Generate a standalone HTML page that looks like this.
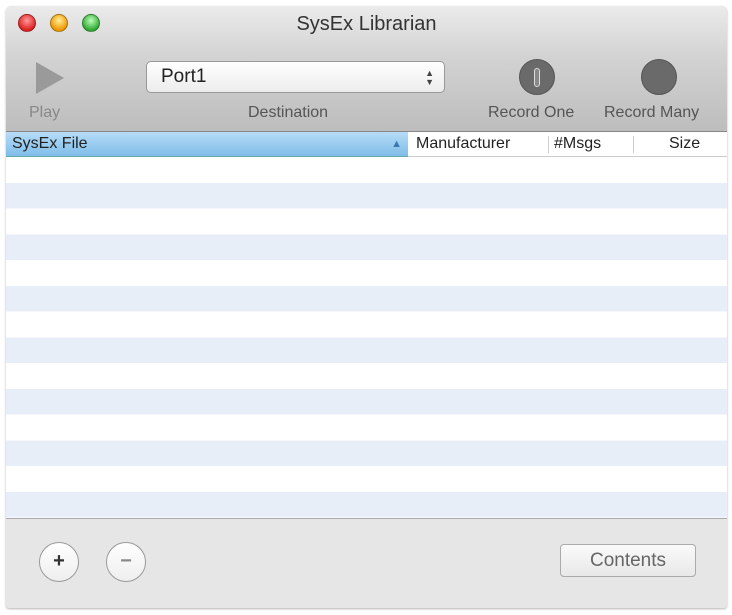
<!DOCTYPE html>
<html><head><meta charset="utf-8"><style>
*{margin:0;padding:0;box-sizing:border-box}
body{width:732px;height:615px;background:#fff;font-family:"Liberation Sans",sans-serif;position:relative;overflow:hidden}
.win{position:absolute;left:6px;top:6px;width:721px;height:602px;background:#e6e6e6;border-radius:5px 5px 3px 3px;overflow:hidden;box-shadow:0 1px 2px rgba(0,0,0,.3)}
.tb{position:absolute;left:0;top:0;width:721px;height:126px;background:linear-gradient(#ebebeb,#d3d3d3 40%,#bdbdbd);border-bottom:1px solid #888}
.light{position:absolute;top:8px;width:18px;height:18px;border-radius:50%;border:1px solid rgba(0,0,0,.3)}
.title{position:absolute;left:0;width:721px;top:7px;text-align:center;font-size:20px;color:#333}
.lbl{position:absolute;top:98px;font-size:16px;color:#555}
.hdr{position:absolute;top:126px;left:0;width:721px;height:25px;background:#fff;border-bottom:1px solid #ccc;font-size:16px;color:#222}
.rows{position:absolute;top:151px;left:0;width:721px;height:361px;background:repeating-linear-gradient(#fff 0,#fff 26px,#e8eef8 26px,#e8eef8 51.5px)}
.bot{position:absolute;top:512px;left:0;width:721px;height:90px;border-top:1px solid #aaa;background:#e6e6e6}
.cb{position:absolute;width:40px;height:40px;border-radius:50%;border:1px solid #999;background:linear-gradient(#fff,#eee);text-align:center;line-height:37px;font-size:20px;font-weight:bold}
</style></head><body>
<div class="win">
<div class="tb">
<div class="light" style="left:12px;background:radial-gradient(circle at 50% 35%,#f99,#d22 70%)"></div>
<div class="light" style="left:44px;background:radial-gradient(circle at 50% 35%,#fe9,#e90 70%)"></div>
<div class="light" style="left:76px;background:radial-gradient(circle at 50% 35%,#bfb,#3a3 70%)"></div>
<div class="title">SysEx Librarian</div>
<svg style="position:absolute;left:28px;top:54px" width="32" height="36"><polygon points="2,2 30,18 2,34" fill="#9a9a9a"/></svg>
<div class="lbl" style="left:23px;color:#888">Play</div>
<div style="position:absolute;left:140px;top:55px;width:299px;height:32px;border:1px solid #999;border-radius:5px;background:linear-gradient(#fff,#ececec);font-size:19px;line-height:30px;padding-left:14px;color:#222">Port1<span style="position:absolute;right:10px;top:0;font-size:9px;line-height:9px;top:7px;color:#444">▲<br>▼</span></div>
<div class="lbl" style="left:242px">Destination</div>
<div style="position:absolute;left:513px;top:53px;width:36px;height:36px;border-radius:50%;background:#6a6a6a;border:1px solid #555"><div style="position:absolute;left:14px;top:8px;width:6px;height:19px;border:1px solid #ddd;border-radius:3px;background:#888"></div></div>
<div class="lbl" style="left:482px">Record One</div>
<div style="position:absolute;left:635px;top:53px;width:36px;height:36px;border-radius:50%;background:#6a6a6a;border:1px solid #555"></div>
<div class="lbl" style="left:598px">Record Many</div>
</div>
<div class="hdr">
<div style="position:absolute;left:0;top:0;width:402px;height:25px;background:linear-gradient(#b6dcf7,#7fbde9);border-bottom:1px solid #6aa;padding-left:6px;line-height:24px">SysEx File<span style="position:absolute;right:6px;top:0;font-size:11px;color:#3a78b0">▲</span></div>
<div style="position:absolute;left:410px;line-height:24px">Manufacturer</div>
<div style="position:absolute;left:542px;top:4px;height:17px;border-left:1px solid #ccc"></div>
<div style="position:absolute;left:548px;line-height:24px">#Msgs</div>
<div style="position:absolute;left:627px;top:4px;height:17px;border-left:1px solid #ccc"></div>
<div style="position:absolute;left:663px;line-height:24px">Size</div>
</div>
<div class="rows"></div>
<div class="bot">
<div class="cb" style="left:33px;top:23px;color:#333">+</div>
<div class="cb" style="left:100px;top:23px;color:#888">−</div>
<div style="position:absolute;left:554px;top:25px;width:136px;height:33px;border:1px solid #aaa;border-radius:4px;background:linear-gradient(#fafafa,#e8e8e8);text-align:center;line-height:31px;font-size:19px;color:#666">Contents</div>
</div>
</div>
</body></html>
